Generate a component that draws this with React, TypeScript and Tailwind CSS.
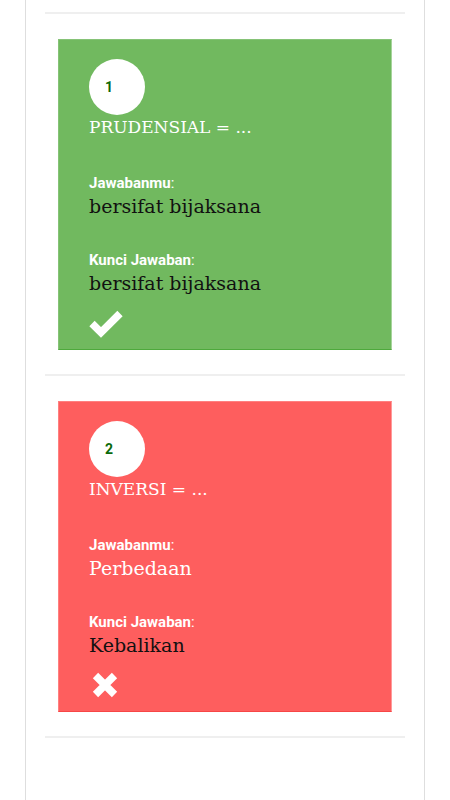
import { Fragment } from 'react';

type Item = {
  no: number;
  question: string;
  answer: string;
  key: string;
  correct: boolean;
};

const items: Item[] = [
  { no: 1, question: 'PRUDENSIAL = ...', answer: 'bersifat bijaksana', key: 'bersifat bijaksana', correct: true },
  { no: 2, question: 'INVERSI = ...', answer: 'Perbedaan', key: 'Kebalikan', correct: false },
];

const serif = "font-['DejaVu_Serif',serif]";

function CheckIcon() {
  return (
    <svg width="34" height="28" viewBox="0 0 34 28" fill="none">
      <polyline points="3,13.5 12,22.5 31,3.5" stroke="#fff" strokeWidth="7.5" strokeLinejoin="miter" />
    </svg>
  );
}

function CrossIcon() {
  return (
    <svg width="26" height="26" viewBox="0 0 26 26" fill="none">
      <path d="M3.5 3.5L22.5 22.5M22.5 3.5L3.5 22.5" stroke="#fff" strokeWidth="7.5" />
    </svg>
  );
}

function ResultCard({ item }: { item: Item }) {
  const ok = item.correct;
  return (
    <div
      className={
        ok
          ? 'mx-[13px] mt-[25px] mb-[24px] bg-[#71b95f] border border-[#86c377] border-r-[#a6d49b] border-b-[#4ea93c] pl-[30px] pt-[19px] pb-[11px]'
          : 'mx-[13px] mt-[25px] mb-[24px] bg-[#fe5e5e] border border-[#ff8080] border-r-[#ff9a9a] border-b-[#f74646] pl-[30px] pt-[19px] pb-[11px]'
      }
    >
      <div className="w-[56px] h-[56px] rounded-full bg-white flex items-center pl-[16px]">
        <span className="font-['Roboto',sans-serif] font-bold text-[14px] leading-[20px] text-[#0b6a0b]">{item.no}</span>
      </div>
      <div className={`${serif} text-[17px] leading-[25px] text-white`}>{item.question}</div>

      <div className="mt-[33px] font-['Roboto',sans-serif] font-bold text-[15px] leading-[20px] text-white">
        Jawabanmu<span className="font-normal">:</span>
      </div>
      <div className={`${serif} text-[19px] leading-[26px] ${ok ? 'text-[#111]' : 'text-white'}`}>{item.answer}</div>

      <div className="mt-[31px] font-['Roboto',sans-serif] font-bold text-[15px] leading-[20px] text-white">
        Kunci Jawaban<span className="font-normal">:</span>
      </div>
      <div className={`${serif} text-[19px] leading-[26px] text-[#111]`}>{item.key}</div>

      <div className="mt-[14px] h-[28px] flex items-start">
        {ok ? (
          <CheckIcon />
        ) : (
          <div className="ml-[3px]">
            <CrossIcon />
          </div>
        )}
      </div>
    </div>
  );
}

export default function App() {
  return (
    <div className="min-h-screen bg-white">
      <div className="mx-[25px] min-h-[800px] border-x border-[#dedede] px-[19px] pt-[12px]">
        {items.map((item) => (
          <Fragment key={item.no}>
            <div className="h-[2px] bg-[#efefef]" />
            <ResultCard item={item} />
          </Fragment>
        ))}
        <div className="h-[2px] bg-[#efefef]" />
      </div>
    </div>
  );
}
